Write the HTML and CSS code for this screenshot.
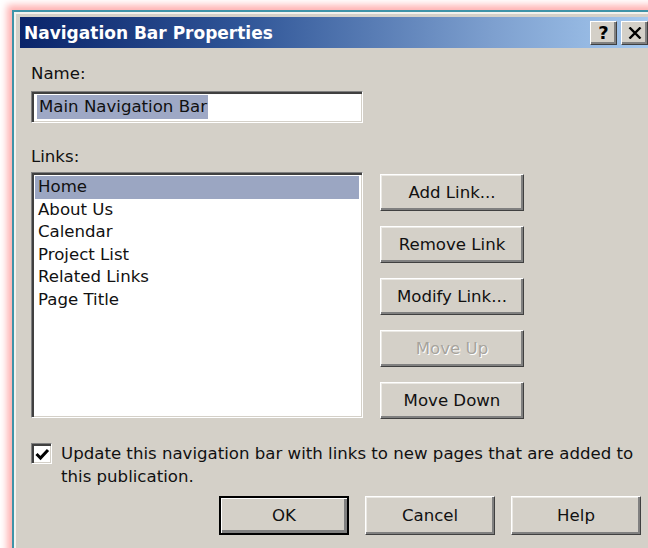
FILE: index.html
```html
<!DOCTYPE html>
<html lang="en">
<head>
<meta charset="utf-8">
<title>Navigation Bar Properties</title>
<link rel="stylesheet" href="styles.css">
</head>
<body>
<div class="window">
  <div class="frame">
    <div class="titlebar">
      <span class="title">Navigation Bar Properties</span>
      <div class="caption-buttons">
        <button class="cap-btn help-q">?</button>
        <button class="cap-btn close">
          <svg width="14" height="12" viewBox="0 0 14 12"><path d="M1.5 0.5 L12.5 11.5 M12.5 0.5 L1.5 11.5" stroke="#000" stroke-width="2.4" fill="none"/></svg>
        </button>
      </div>
    </div>
    <div class="content">
      <div class="label">Name:</div>
      <div class="field name-field"><span class="selected-text">Main Navigation Bar</span></div>

      <div class="label links-label">Links:</div>
      <div class="links-row">
        <ul class="listbox field">
          <li class="item current">Home</li>
          <li class="item">About Us</li>
          <li class="item">Calendar</li>
          <li class="item">Project List</li>
          <li class="item">Related Links</li>
          <li class="item">Page Title</li>
        </ul>
        <div class="side-buttons">
          <button class="btn side">Add Link...</button>
          <button class="btn side">Remove Link</button>
          <button class="btn side">Modify Link...</button>
          <button class="btn side disabled">Move Up</button>
          <button class="btn side">Move Down</button>
        </div>
      </div>

      <div class="check-row">
        <span class="checkbox">
          <svg width="15" height="13" viewBox="0 0 15 13"><path d="M1.5 6 L5.5 10 L13 2" stroke="#000" stroke-width="3" fill="none"/></svg>
        </span>
        <span class="check-text">Update this navigation bar with links to new pages that are added to this publication.</span>
      </div>

      <div class="footer">
        <button class="btn footer-btn default">OK</button>
        <button class="btn footer-btn">Cancel</button>
        <button class="btn footer-btn">Help</button>
      </div>
    </div>
  </div>
</div>
</body>
</html>
```

FILE: styles.css
```css
html, body {
  margin: 0;
  padding: 0;
  background: #ffffff;
  overflow: hidden;
  width: 648px;
  height: 548px;
}

body {
  font-family: "DejaVu Sans", sans-serif;
  font-size: 16.6px;
  color: #111;
}

/* outer window with teal edge and soft pink glow */
.window {
  margin: 10px 0 0 12px;
  width: 644px;
  height: 560px;
  border: 2px solid #3f93a8;
  box-shadow: 0 0 7px 5px #ffb3b3;
  background: #d4d0c8;
}

.frame {
  height: 100%;
  box-sizing: border-box;
  border: 2px solid;
  border-color: #f4f2ee #808080 #808080 #f4f2ee;
  padding: 3px 4px 0 4px;
  background: #d4d0c8;
}

.titlebar {
  height: 31px;
  background: linear-gradient(to right, #0a246a 0%, #2f5597 35%, #7ea0cf 75%, #a6caf0 100%);
  display: flex;
  align-items: center;
  justify-content: space-between;
  padding-left: 4px;
}

.title {
  color: #fff;
  font-weight: bold;
  font-size: 17px;
}

.caption-buttons {
  display: flex;
  gap: 4px;
  margin-right: 4px;
}

.cap-btn {
  width: 27px;
  height: 24px;
  padding: 0;
  background: #d4d0c8;
  border: 1px solid;
  border-color: #fff #404040 #404040 #fff;
  box-shadow: inset -2px -2px #808080;
  display: flex;
  align-items: center;
  justify-content: center;
  font-family: "DejaVu Sans", sans-serif;
  font-weight: bold;
  font-size: 18px;
  line-height: 1;
  color: #000;
}

.content {
  padding: 15px 11px 0 11px;
}

.label {
  line-height: 22px;
}

.field {
  background: #fff;
  border: 1px solid;
  border-color: #808080 #fff #fff #808080;
  box-shadow: inset 2px 2px #404040, inset -1px -1px #d4d0c8;
  box-sizing: border-box;
}

.name-field {
  margin-top: 6px;
  width: 332px;
  height: 32px;
  padding: 3px 0 0 5px;
}

.selected-text {
  display: inline-block;
  background: #9ea8c5;
  line-height: 24px;
  padding: 0 1px 0 2px;
}

.links-label {
  margin-top: 23px;
}

.links-row {
  display: flex;
  gap: 17px;
  margin-top: 4px;
}

.listbox {
  list-style: none;
  margin: 0;
  width: 332px;
  height: 246px;
  padding: 3px 3px;
}

.item {
  line-height: 22.6px;
  padding-left: 3px;
}

.item.current {
  background: #9ba6c2;
}

.side-buttons {
  display: flex;
  flex-direction: column;
  gap: 15px;
  padding-top: 2px;
}

.btn {
  font: inherit;
  color: #111;
  background: #d4d0c8;
  border: 1px solid;
  border-color: #fff #404040 #404040 #fff;
  box-shadow: inset -2px -2px #808080, inset 1px 1px #ebe9e4;
  padding: 0;
}

.side {
  width: 144px;
  height: 37px;
}

.btn.disabled {
  color: #a7a49d;
  text-shadow: 1px 1px #fff;
}

.check-row {
  display: flex;
  align-items: flex-start;
  gap: 9px;
  margin-top: 24px;
}

.checkbox {
  flex: none;
  width: 21px;
  height: 21px;
  box-sizing: border-box;
  background: #fff;
  border: 1px solid;
  border-color: #808080 #fff #fff #808080;
  box-shadow: inset 2px 2px #404040, inset -1px -1px #d4d0c8;
  display: flex;
  align-items: center;
  justify-content: center;
  padding: 2px 0 0 2px;
}

.check-text {
  line-height: 23px;
  margin-top: -1px;
}

.footer {
  display: flex;
  justify-content: flex-end;
  gap: 16px;
  margin-top: 8px;
}

.footer-btn {
  width: 130px;
  height: 39px;
}

.footer-btn.default {
  border: 2px solid #000;
  box-shadow: inset 1px 1px #fff, inset -3px -3px #808080, inset -1px -1px #404040;
}
```
